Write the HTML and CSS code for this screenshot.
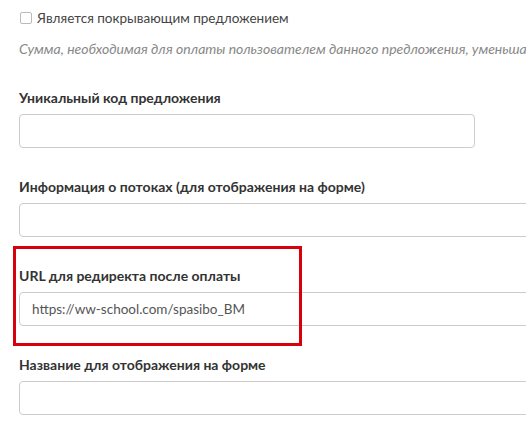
FILE: index.html
```html
<!DOCTYPE html>
<html lang="ru">
<head>
  <meta charset="UTF-8">
  <title>Предложение</title>
  <link rel="stylesheet" href="styles.css">
</head>
<body>
  <div class="form">
    <label class="check-row"><span class="check-box"></span> Является покрывающим предложением</label>
    <p class="hint">Сумма, необходимая для оплаты пользователем данного предложения, уменьшается на сумму ранее оплаченных</p>

    <div class="field">
      <label>Уникальный код предложения</label>
      <input type="text" class="short">
    </div>

    <div class="field">
      <label>Информация о потоках (для отображения на форме)</label>
      <input type="text">
    </div>

    <div class="field marked">
      <label>URL для редиректа после оплаты</label>
      <input type="text" value="https://ww-school.com/spasibo_BM">
      <div class="highlight"></div>
    </div>

    <div class="field">
      <label>Название для отображения на форме</label>
      <input type="text">
    </div>
  </div>
</body>
</html>
```

FILE: styles.css
```css
body {
  margin: 0;
  background: #fff;
  font-family: Lato, "Open Sans", sans-serif;
  color: #333;
  overflow: hidden;
}

.form {
  padding: 9px 0 0 19px;
  width: 600px;
}

.check-row {
  display: flex;
  align-items: center;
  gap: 5px;
  font-size: 13.5px;
  color: #444;
  height: 18px;
}

.check-box {
  width: 10px;
  height: 10px;
  border: 1px solid #bbb;
  border-radius: 2px;
  margin-left: 1px;
}

.hint {
  margin: 13px 0 0;
  font-size: 14px;
  font-style: italic;
  color: #888;
  white-space: nowrap;
  height: 19px;
}

.field {
  margin-top: 30px;
  position: relative;
}

.field label {
  display: block;
  font-size: 14px;
  font-weight: bold;
  color: #333;
  line-height: 18px;
  margin-bottom: 7px;
}

.field input {
  display: block;
  box-sizing: border-box;
  width: 560px;
  height: 34px;
  border: 1px solid #ccc;
  border-radius: 4px;
  padding: 0 12px;
  font-family: Lato, "Open Sans", sans-serif;
  font-size: 13.5px;
  color: #555;
}

.field input.short {
  width: 456px;
}

.highlight {
  position: absolute;
  left: -6px;
  top: -21px;
  width: 283px;
  height: 94px;
  border: 3px solid #d9000d;
}
```
